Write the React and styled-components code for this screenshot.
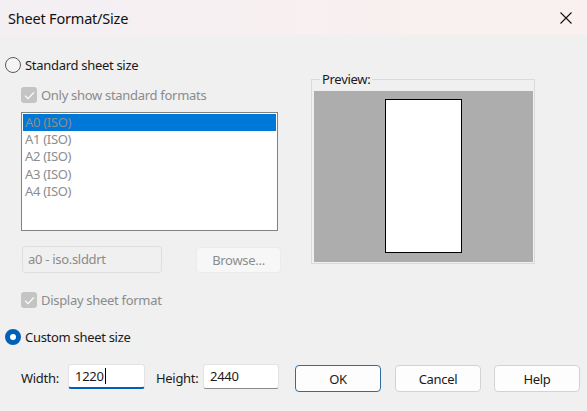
import styled, { createGlobalStyle } from "styled-components"

const GlobalStyle = createGlobalStyle`
  html, body {
    margin: 0;
    padding: 0;
    background: #f0f0f0;
  }
  * { box-sizing: border-box; }
`

const Window = styled.div`
  width: 587px;
  height: 411px;
  background: #f0f0f0;
  font-family: "Noto Sans", "Open Sans", sans-serif;
  font-size: 13px;
  letter-spacing: -0.3px;
  color: #1a1a1a;
  overflow: hidden;
`

const TitleBar = styled.div`
  height: 35px;
  display: flex;
  align-items: center;
  justify-content: space-between;
  padding-left: 8px;
  background: linear-gradient(90deg, #f3eff3 0%, #f8f0f0 60%, #f9f0ef 100%);
`

const Title = styled.span`
  font-size: 14.5px;
  letter-spacing: -0.2px;
  color: #111;
`

const CloseBtn = styled.div`
  width: 46px;
  height: 35px;
  display: flex;
  align-items: center;
  justify-content: center;
  padding-left: 4px;
`

const Main = styled.div`
  display: flex;
  padding-left: 5px;
`

const LeftCol = styled.div`
  width: 276px;
  display: flex;
  flex-direction: column;
`

const RightCol = styled.div`
  margin-left: 30px;
  padding-top: 37px;
`

const OptionRow = styled.label`
  display: flex;
  align-items: center;
  gap: ${p => p.$gap || 4}px;
  height: 16px;
  margin-top: ${p => p.$top}px;
  padding-left: ${p => p.$indent || 0}px;
  color: ${p => (p.$disabled ? "#8b8b8b" : "#1a1a1a")};
  white-space: nowrap;
`

const Radio = styled.span`
  width: 16px;
  height: 16px;
  border-radius: 50%;
  flex-shrink: 0;
  position: relative;
  ${p =>
    p.$checked
      ? `background: #005fb8; border: 5px solid #005fb8;`
      : `background: #f5f5f5; border: 1px solid #5a5a5a;`}
  &::after {
    content: "";
    display: ${p => (p.$checked ? "block" : "none")};
    position: absolute;
    inset: 0;
    border-radius: 50%;
    background: #fff;
  }
`

const CheckBox = styled.span`
  width: 16px;
  height: 16px;
  border-radius: 3px;
  background: #c4c4c4;
  flex-shrink: 0;
  display: flex;
  align-items: center;
  justify-content: center;
`

const ListBox = styled.div`
  margin-top: 9px;
  margin-left: 16px;
  width: 257px;
  height: 119px;
  background: #fff;
  border: 1px solid #828282;
  padding: 1px;
`

const ListItem = styled.div`
  height: 17.2px;
  line-height: 17px;
  padding-left: 2px;
  color: #8d8d8d;
  background: ${p => (p.$selected ? "#0078d7" : "transparent")};
`

const FieldRow = styled.div`
  display: flex;
  margin-top: 15px;
  margin-left: 17px;
  gap: 34px;
  align-items: flex-start;
`

const ReadField = styled.div`
  width: 140px;
  height: 27px;
  border: 1px solid #dedede;
  border-radius: 3px;
  background: #f0f0f0;
  color: #8b8b8b;
  padding: 3px 0 0 5px;
`

const GhostButton = styled.div`
  width: 85px;
  height: 26px;
  margin-top: 1px;
  border: 1px solid #ebebeb;
  border-radius: 4px;
  background: #f7f7f7;
  color: #8d8d8d;
  display: flex;
  align-items: center;
  justify-content: center;
`

const Group = styled.fieldset`
  margin: 0;
  width: 224px;
  height: 192px;
  border: 1px solid #dadada;
  padding: 5px 1px 1px 2px;
  display: flex;
  flex-direction: column;
`

const Legend = styled.legend`
  padding: 0 2px;
  margin-left: 6px;
  line-height: 14px;
  color: #1a1a1a;
`

const PreviewArea = styled.div`
  flex: 1;
  background: #adadad;
  display: flex;
  justify-content: center;
  padding-top: 8px;
`

const Paper = styled.div`
  width: 77px;
  height: 154px;
  background: #fff;
  border: 1px solid #000;
`

const BottomRow = styled.div`
  display: flex;
  align-items: center;
  margin-top: 19px;
  padding-left: 21px;
  height: 28px;
`

const FieldLabel = styled.span`
  width: 47px;
  flex-shrink: 0;
`

const Input = styled.div`
  width: ${p => p.$w}px;
  height: 25px;
  background: #fff;
  border: 1px solid #e3e3e3;
  border-bottom: ${p => (p.$focused ? "2px solid #005fb8" : "1px solid #8a8a8a")};
  border-radius: 3px;
  padding: 2px 0 0 6px;
  margin-right: ${p => p.$after}px;
  align-self: flex-start;
  color: #1a1a1a;
`

const Caret = styled.span`
  display: inline-block;
  width: 1px;
  height: 16px;
  background: #000;
  vertical-align: -3px;
  margin-left: 1px;
`

const Button = styled.div`
  width: 86px;
  height: 27px;
  margin-left: ${p => p.$gap}px;
  background: #fdfdfd;
  border: 1px solid ${p => (p.$default ? "#2b6ea3" : "#d3d3d3")};
  border-radius: 4px;
  display: flex;
  align-items: center;
  justify-content: center;
  color: #1a1a1a;
  align-self: flex-start;
  margin-top: 1px;
`

const Check = () => (
  <svg width="11" height="9" viewBox="0 0 11 9">
    <path d="M1 4.6 L4 7.6 L10 1.4" fill="none" stroke="#fff" strokeWidth="1.3" />
  </svg>
)

const formats = ["A0 (ISO)", "A1 (ISO)", "A2 (ISO)", "A3 (ISO)", "A4 (ISO)"]

const App = () => {
  return (
    <Window>
      <GlobalStyle />
      <TitleBar>
        <Title>Sheet Format/Size</Title>
        <CloseBtn>
          <svg width="12" height="12" viewBox="0 0 12 12">
            <path d="M0.5 0.5 L11.5 11.5 M11.5 0.5 L0.5 11.5" stroke="#111" strokeWidth="1.1" />
          </svg>
        </CloseBtn>
      </TitleBar>

      <Main>
        <LeftCol>
          <OptionRow $top={22}>
            <Radio />
            Standard sheet size
          </OptionRow>
          <OptionRow $top={14} $indent={16} $gap={4} $disabled>
            <CheckBox><Check /></CheckBox>
            Only show standard formats
          </OptionRow>
          <ListBox>
            {formats.map((f, i) => (
              <ListItem key={f} $selected={i === 0}>{f}</ListItem>
            ))}
          </ListBox>
          <FieldRow>
            <ReadField>a0 - iso.slddrt</ReadField>
            <GhostButton>Browse...</GhostButton>
          </FieldRow>
          <OptionRow $top={19} $indent={16} $gap={4} $disabled>
            <CheckBox><Check /></CheckBox>
            Display sheet format
          </OptionRow>
          <OptionRow $top={21}>
            <Radio $checked />
            Custom sheet size
          </OptionRow>
        </LeftCol>

        <RightCol>
          <Group>
            <Legend>Preview:</Legend>
            <PreviewArea>
              <Paper />
            </PreviewArea>
          </Group>
        </RightCol>
      </Main>

      <BottomRow>
        <FieldLabel>Width:</FieldLabel>
        <Input $w={77} $focused $after={11}>1220<Caret /></Input>
        <FieldLabel>Height:</FieldLabel>
        <Input $w={76}>2440</Input>
        <Button $default $gap={16}>OK</Button>
        <Button $gap={14}>Cancel</Button>
        <Button $gap={13}>Help</Button>
      </BottomRow>
    </Window>
  )
}

export default App
